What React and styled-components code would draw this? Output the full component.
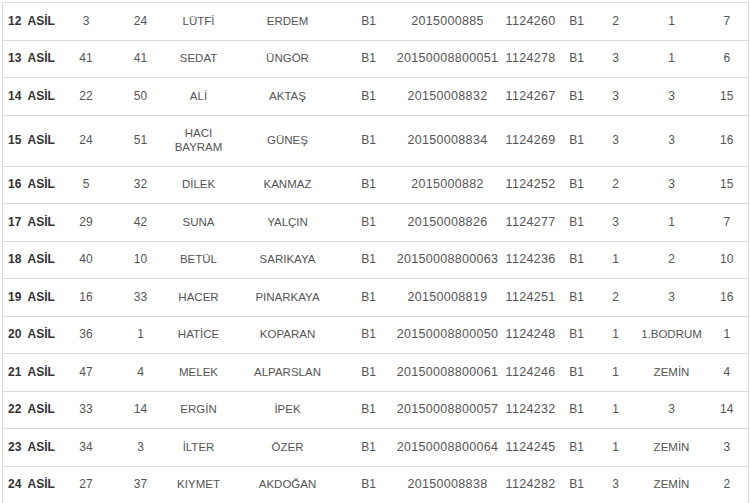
import React from "react";
import styled, { createGlobalStyle } from "styled-components";

const GlobalStyle = createGlobalStyle`
  html, body {
    margin: 0;
    padding: 0;
    background: #ffffff;
  }
  body {
    font-family: "Liberation Sans", Arial, sans-serif;
  }
`;

const Wrapper = styled.div`
  padding: 2px 2px 0 2px;
  width: 750px;
  box-sizing: border-box;
  overflow: hidden;
`;

const Table = styled.table`
  width: 746px;
  table-layout: fixed;
  border-collapse: collapse;
  border-left: 1px solid #dcdcdc;
  border-right: 1px solid #dcdcdc;
  font-size: 12px;
  color: #555;
`;

const Row = styled.tr`
  border-top: 1px solid #dcdcdc;
`;

// text cells (names, floor) are a bit narrower than the number cells
const sizes = { text: "11.5px", num: "12.5px", base: "12px" };

const Cell = styled.td`
  padding: 11.5px 2px;
  line-height: 13.5px;
  font-size: ${(p) => sizes[p.$kind || "base"]};
  letter-spacing: ${(p) => (p.$kind === "num" ? "0.3px" : "0")};
  text-align: ${(p) => (p.$left ? "left" : "center")};
  vertical-align: middle;
  white-space: ${(p) => (p.$nowrap ? "nowrap" : "normal")};
`;

const RankCell = styled(Cell)`
  font-weight: bold;
  color: #333;
  padding-left: ${(p) => p.$pl}px;
  padding-right: 0;
`;

const widths = [22, 32, 59, 50, 66, 112, 50, 108, 58, 34, 44, 68, 43];

const rows = [
  [12, 3, 24, "LÜTFİ", "ERDEM", "2015000885", "1124260", 2, "1", 7],
  [13, 41, 41, "SEDAT", "ÜNGÖR", "20150008800051", "1124278", 3, "1", 6],
  [14, 22, 50, "ALİ", "AKTAŞ", "20150008832", "1124267", 3, "3", 15],
  [15, 24, 51, "HACI BAYRAM", "GÜNEŞ", "20150008834", "1124269", 3, "3", 16],
  [16, 5, 32, "DİLEK", "KANMAZ", "2015000882", "1124252", 2, "3", 15],
  [17, 29, 42, "SUNA", "YALÇIN", "20150008826", "1124277", 3, "1", 7],
  [18, 40, 10, "BETÜL", "SARIKAYA", "20150008800063", "1124236", 1, "2", 10],
  [19, 16, 33, "HACER", "PINARKAYA", "20150008819", "1124251", 2, "3", 16],
  [20, 36, 1, "HATİCE", "KOPARAN", "20150008800050", "1124248", 1, "1.BODRUM", 1],
  [21, 47, 4, "MELEK", "ALPARSLAN", "20150008800061", "1124246", 1, "ZEMİN", 4],
  [22, 33, 14, "ERGİN", "İPEK", "20150008800057", "1124232", 1, "3", 14],
  [23, 34, 3, "İLTER", "ÖZER", "20150008800064", "1124245", 1, "ZEMİN", 3],
  [24, 27, 37, "KIYMET", "AKDOĞAN", "20150008838", "1124282", 3, "ZEMİN", 2],
];

export default function App() {
  return (
    <>
      <GlobalStyle />
      <Wrapper>
        <Table>
          <colgroup>
            {widths.map((w, i) => (
              <col key={i} style={{ width: w }} />
            ))}
          </colgroup>
          <tbody>
            {rows.map((r) => (
              <Row key={r[0]}>
                <RankCell $left $pl={5}>{r[0]}</RankCell>
                <RankCell $left $pl={3}>ASİL</RankCell>
                <Cell>{r[1]}</Cell>
                <Cell>{r[2]}</Cell>
                <Cell $kind="text">{r[3]}</Cell>
                <Cell $kind="text">{r[4]}</Cell>
                <Cell>B1</Cell>
                <Cell $kind="num" $nowrap>{r[5]}</Cell>
                <Cell $kind="num">{r[6]}</Cell>
                <Cell>B1</Cell>
                <Cell>{r[7]}</Cell>
                <Cell $kind={r[8].length === 1 ? "base" : "text"} $nowrap>
                  {r[8]}
                </Cell>
                <Cell>{r[9]}</Cell>
              </Row>
            ))}
          </tbody>
        </Table>
      </Wrapper>
    </>
  );
}
